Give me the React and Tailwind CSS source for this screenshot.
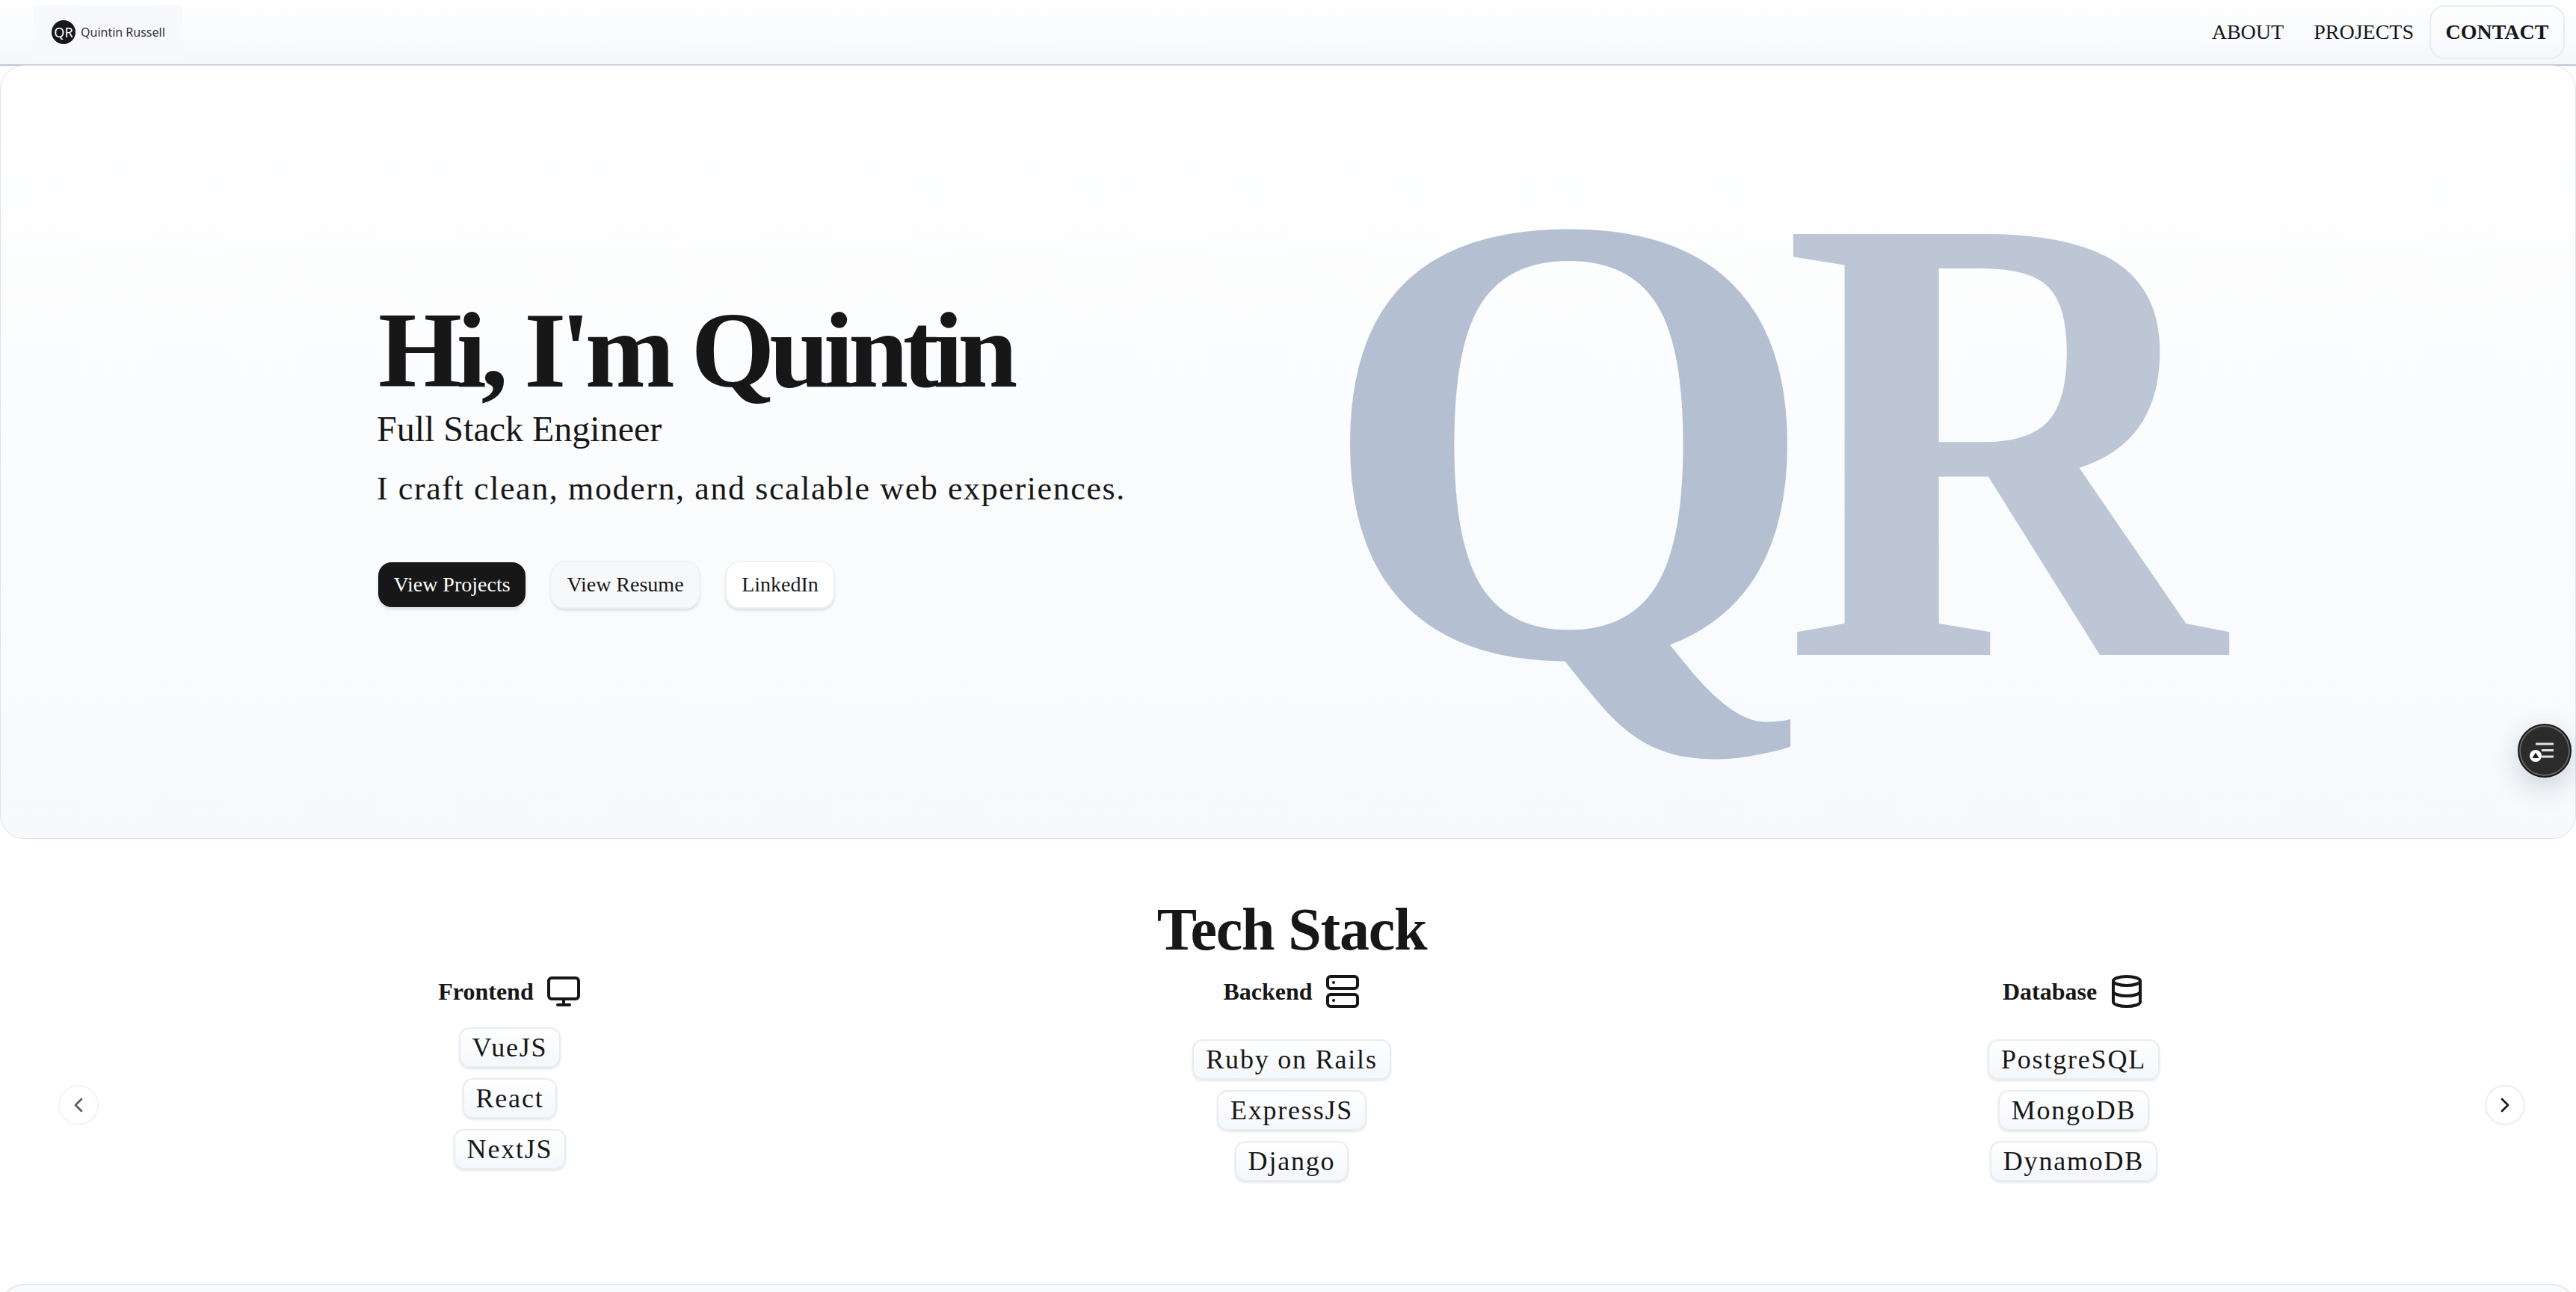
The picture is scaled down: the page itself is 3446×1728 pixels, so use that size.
import { ChevronLeft, ChevronRight, Database, Monitor, Server } from "lucide-react";

const serif = "font-['Liberation_Serif',serif]";

const stacks = [
  { title: "Frontend", Icon: Monitor, items: ["VueJS", "React", "NextJS"], listClass: "mt-[24px]" },
  { title: "Backend", Icon: Server, items: ["Ruby on Rails", "ExpressJS", "Django"], listClass: "mt-[40px]" },
  { title: "Database", Icon: Database, items: ["PostgreSQL", "MongoDB", "DynamoDB"], listClass: "mt-[40px]" },
];

function Nav() {
  return (
    <nav className="h-[88px] shrink-0 flex items-center justify-between pl-[44px] pr-[15px] bg-linear-to-b from-white to-[#f4f7fb] border-b-2 border-[#bcc8d9]">
      <a className="w-[200px] h-[72px] flex items-center gap-[7px] pl-[25px] bg-[#f7f9fc] font-['Noto_Sans',sans-serif] text-[16px] text-[#333]">
        <span className="w-[32px] h-[32px] rounded-full bg-[#171717] text-white text-[18px] flex items-center justify-center">QR</span>
        Quintin Russell
      </a>
      <div className={`flex items-center text-[28px] text-[#171717] ${serif}`}>
        <a className="mr-[40px]">ABOUT</a>
        <a className="mr-[21px]">PROJECTS</a>
        <a className="h-[72px] w-[181px] flex items-center justify-center font-bold border-2 border-[#e8ebef] rounded-[20px]">CONTACT</a>
      </div>
    </nav>
  );
}

function Hero() {
  return (
    <section className={`h-[1035px] shrink-0 flex items-center overflow-hidden bg-linear-to-b from-white to-[#f7f9fc] border border-[#dfe3e8] rounded-[32px] -mt-[1px] text-[#171717] ${serif}`}>
      <div className="pl-[505px] pt-[2px] w-[1560px] shrink-0">
        <h1 className="text-[144px] leading-none font-bold tracking-[-0.05em]">Hi, I'm Quintin</h1>
        <p className="-ml-[2px] text-[48px] leading-[66px]">Full Stack Engineer</p>
        <p className="-ml-[2px] mt-[14px] text-[44px] leading-[66px] tracking-[1.6px]">I craft clean, modern, and scalable web experiences.</p>
        <div className="mt-[63px] flex items-center gap-[33px] text-[28px]">
          <button className="h-[60px] w-[197px] rounded-[18px] bg-[#171717] text-white shadow-[0_3px_4px_rgba(0,0,0,0.12)]">View Projects</button>
          <button className="h-[64px] w-[201px] rounded-[20px] border-2 border-[#f0f2f5] bg-[#f6f8fa] shadow-[0_3px_3px_rgba(0,0,0,0.1)]">View Resume</button>
          <button className="h-[64px] w-[147px] rounded-[20px] border-2 border-[#f0f2f5] bg-white shadow-[0_3px_3px_rgba(0,0,0,0.1)]">LinkedIn</button>
        </div>
      </div>
      <div className="ml-[203px] -mt-[37px] text-[860px] leading-none font-bold whitespace-nowrap">
        <span className="text-[#b4c0d1]">Q</span>
        <span className="inline-block -ml-[48px] origin-left scale-x-[0.95] text-[#bcc6d5]">R</span>
      </div>
    </section>
  );
}

function FloatingButton() {
  return (
    <button className="absolute left-[3368px] top-[968px] w-[72px] h-[72px] rounded-full bg-[#2b2b2b] border-2 border-[#1a1a1a] shadow-[inset_0_0_0_2px_#666,0_12px_36px_rgba(60,70,90,0.22)]">
      <svg className="absolute -left-[2px] -top-[2px]" width="72" height="72" viewBox="0 0 72 72" fill="none">
        <path d="M24 27h24M32 35.5h16M32 44h16" stroke="#dfe3ea" strokeWidth="3" />
        <circle cx="24" cy="43" r="8" fill="white" />
        <path d="M24 38.5l4.5 7.5h-9z" fill="#1c1c1c" />
      </svg>
    </button>
  );
}

function StackColumn({ title, Icon, items, listClass }) {
  return (
    <div className="flex flex-col items-center">
      <div className="flex items-center gap-4 text-[32px] font-bold">
        {title}
        <Icon size={48} strokeWidth={2} />
      </div>
      <ul className={`flex flex-col items-center gap-[14px] ${listClass}`}>
        {items.map((item) => (
          <li
            key={item}
            className="h-[54px] px-[16px] flex items-center text-[36px] tracking-[0.05em] rounded-[14px] border-2 border-[#e8ebef] bg-linear-to-b from-white to-[#f4f7fb] shadow-[0_2px_3px_rgba(0,0,0,0.1)]"
          >
            {item}
          </li>
        ))}
      </ul>
    </div>
  );
}

function TechStack() {
  return (
    <section className={`relative h-[595px] shrink-0 pt-[81px] bg-white text-[#171717] ${serif}`}>
      <h2 className="text-[80px] leading-none font-bold tracking-[-1.2px] text-center pl-[10px]">Tech Stack</h2>
      <div className="mt-[19px] grid grid-cols-3 pl-[159px] pr-[149px]">
        {stacks.map((stack) => (
          <StackColumn key={stack.title} {...stack} />
        ))}
      </div>
      <button className="absolute left-[78px] top-[329px] w-[54px] h-[54px] rounded-full border-2 border-[#f1f3f6] bg-white flex items-center justify-center text-[#555b66]">
        <ChevronLeft size={32} />
      </button>
      <button className="absolute right-[68px] top-[329px] w-[54px] h-[54px] rounded-full border-2 border-[#e8ebef] bg-white flex items-center justify-center text-[#171717]">
        <ChevronRight size={32} />
      </button>
    </section>
  );
}

export default function App() {
  return (
    <div className="relative h-screen overflow-hidden flex flex-col bg-white">
      <Nav />
      <Hero />
      <TechStack />
      <div className="h-[40px] shrink-0 rounded-t-[32px] border-t-2 border-x-2 border-[#e5e8ec] bg-[#f8fafc]" />
      <FloatingButton />
    </div>
  );
}
